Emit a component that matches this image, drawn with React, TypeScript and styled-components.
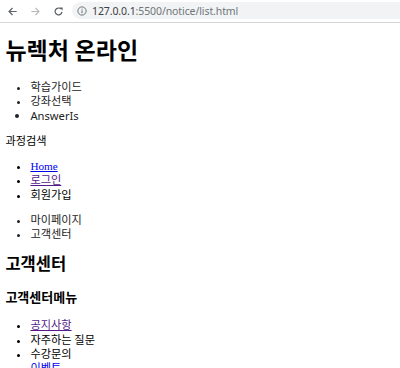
import React from "react";
import styled, { createGlobalStyle } from "styled-components";

const Global = createGlobalStyle`
  html, body { margin: 0; padding: 0; overflow: hidden; background: #fff; }
  body { width: 400px; height: 368px; }
`;

const Chrome = styled.div`
  height: 22px;
  border-bottom: 1px solid #d6d6d6;
  display: flex;
  align-items: center;
  background: #fff;
  box-sizing: content-box;
`;

const NavBtn = styled.div`
  width: 22px;
  height: 22px;
  display: flex;
  align-items: center;
  justify-content: center;
  flex: none;
`;

const NavGroup = styled.div`
  display: flex;
  align-items: center;
  gap: 1px;
  padding-left: 1px;
  margin-right: 3px;
`;

const Address = styled.div`
  flex: 1;
  height: 17px;
  margin-top: -1px;
  background: #f1f3f4;
  border-radius: 9px 0 0 9px;
  display: flex;
  align-items: center;
  padding-left: 5px;
  gap: 5px;
  font-family: "Noto Sans", "Liberation Sans", sans-serif;
  font-size: 10.5px;
  letter-spacing: -0.1px;
`;

const Host = styled.span`
  color: #3c4043;
`;
const Path = styled.span`
  color: #70757a;
`;

const Page = styled.div`
  padding: 0 5.4px;
  font-family: "Liberation Serif", "Noto Sans CJK KR", serif;
  font-size: 11.2px;
  line-height: 14.4px;
  color: #000;
  overflow: hidden;
  height: 345px;
`;

const Title = styled.h1`
  font-size: 23px;
  line-height: 27px;
  margin: 15px 0 15px;
  font-weight: bold;
`;

const SubTitle = styled.h2<{ $size: number; $lh: number; $m: string }>`
  font-size: ${(p) => p.$size}px;
  line-height: ${(p) => p.$lh}px;
  margin: ${(p) => p.$m};
  font-weight: bold;
`;

const List = styled.ul<{ $m?: string }>`
  margin: ${(p) => p.$m ?? "10.7px 0"};
  padding-left: 25px;
  list-style: disc;
`;

const Item = styled.li<{ $sans?: boolean; $muted?: boolean }>`
  color: ${(p) => (p.$muted ? "#222" : "#000")};
  font-family: ${(p) =>
    p.$sans ? '"Noto Sans", "Noto Sans CJK KR", sans-serif' : "inherit"};
`;

const Link = styled.a<{ $visited?: boolean }>`
  color: ${(p) => (p.$visited ? "#551a8b" : "#0000ee")};
  text-decoration: underline;
  cursor: pointer;
`;

const Label = styled.div`
  margin: 0;
`;

const Back = () => (
  <svg width="11" height="11" viewBox="0 0 16 16">
    <path d="M14 8H3M8 3L3 8l5 5" fill="none" stroke="#5f6368" strokeWidth="1.8" />
  </svg>
);
const Fwd = () => (
  <svg width="11" height="11" viewBox="0 0 16 16">
    <path d="M2 8h11M8 3l5 5-5 5" fill="none" stroke="#b9bbbe" strokeWidth="1.8" />
  </svg>
);
const Reload = () => (
  <svg width="11" height="11" viewBox="0 0 16 16">
    <path d="M13 8.5A5 5 0 1 1 11.6 4.4" fill="none" stroke="#5f6368" strokeWidth="1.8" />
    <path d="M9.5 2h4.5v4.5z" fill="#5f6368" />
  </svg>
);
const Info = () => (
  <svg width="10" height="10" viewBox="0 0 16 16">
    <circle cx="8" cy="8" r="6.6" fill="none" stroke="#5f6368" strokeWidth="1.4" />
    <path d="M8 7v4.5M8 4.3v1.4" stroke="#5f6368" strokeWidth="1.5" />
  </svg>
);

export default function App() {
  return (
    <>
      <Global />
      <Chrome>
        <NavGroup>
          <NavBtn><Back /></NavBtn>
          <NavBtn><Fwd /></NavBtn>
          <NavBtn><Reload /></NavBtn>
        </NavGroup>
        <Address>
          <Info />
          <span>
            <Host>127.0.0.1</Host>
            <Path>:5500/notice/list.html</Path>
          </span>
        </Address>
      </Chrome>
      <Page>
        <Title>뉴렉처 온라인</Title>
        <List>
          <Item $muted>학습가이드</Item>
          <Item $muted>강좌선택</Item>
          <Item $muted $sans>AnswerIs</Item>
        </List>
        <Label>과정검색</Label>
        <List>
          <Item><Link>Home</Link></Item>
          <Item><Link $visited>로그인</Link></Item>
          <Item>회원가입</Item>
        </List>
        <List>
          <Item $muted>마이페이지</Item>
          <Item $muted>고객센터</Item>
        </List>
        <SubTitle $size={16.5} $lh={23} $m="11.5px 0 13px">고객센터</SubTitle>
        <SubTitle as="h3" $size={13} $lh={18} $m="12.5px 0 11px">고객센터메뉴</SubTitle>
        <List $m="11px 0">
          <Item><Link $visited>공지사항</Link></Item>
          <Item>자주하는 질문</Item>
          <Item>수강문의</Item>
          <Item><Link>이벤트</Link></Item>
        </List>
      </Page>
    </>
  );
}
